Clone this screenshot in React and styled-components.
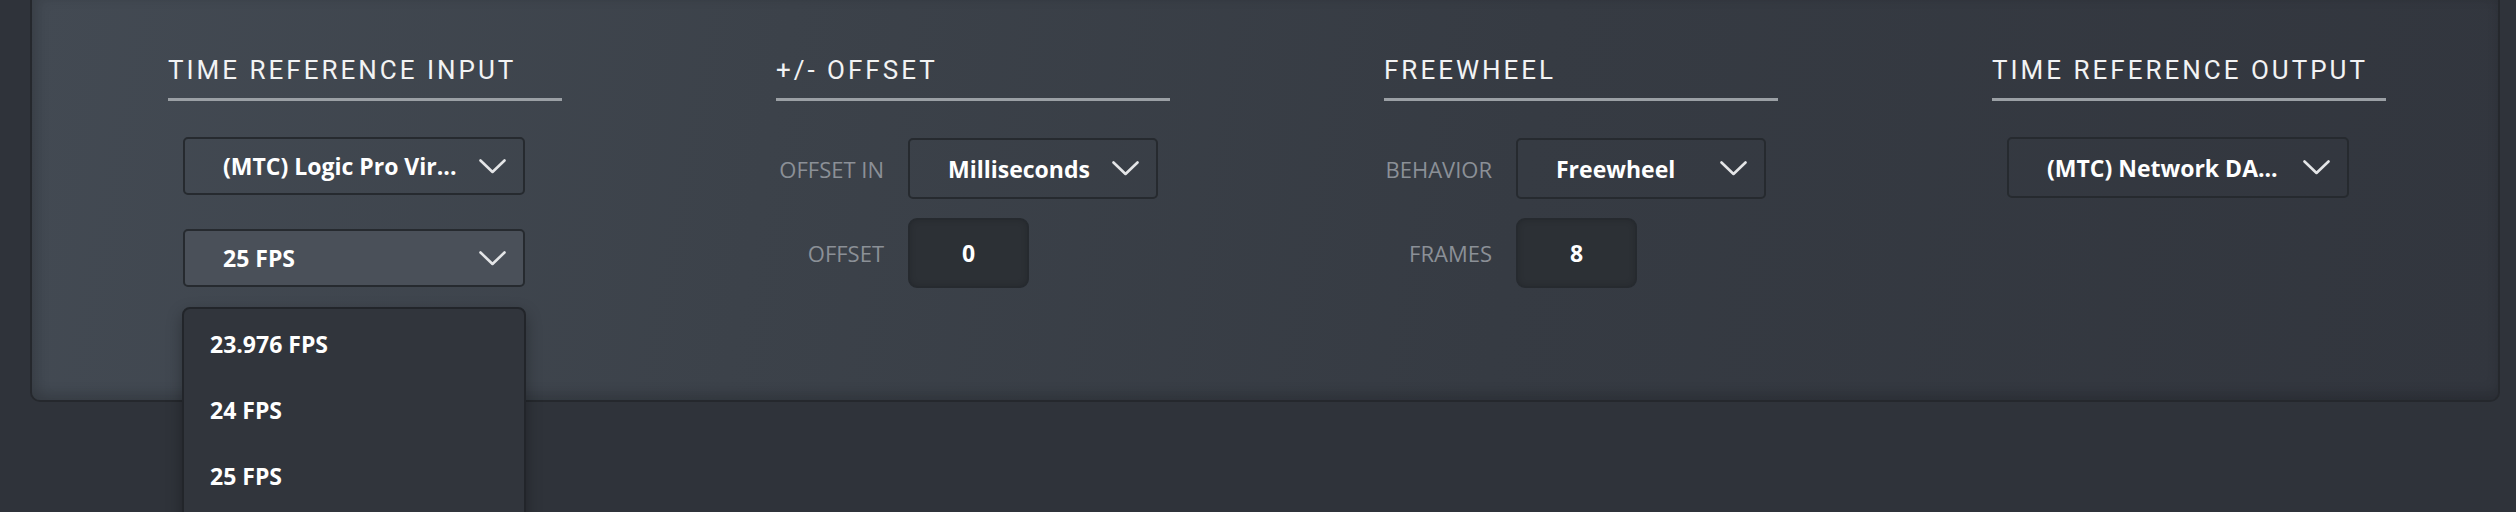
import React, { useState } from 'react'
import styled, { createGlobalStyle } from 'styled-components'

const GlobalStyle = createGlobalStyle`
  html, body {
    margin: 0;
    padding: 0;
    background: #2f333a;
    overflow: hidden;
  }
`

const FPS_OPTIONS = ['23.976 FPS', '24 FPS', '25 FPS']

const Chevron = () => (
  <svg width="27" height="15" viewBox="0 0 27 15" fill="none">
    <polyline points="1.5,1.5 13.5,13 25.5,1.5" stroke="#e4e5e7" strokeWidth="2.6" strokeLinecap="round" strokeLinejoin="round" />
  </svg>
)

const Dropdown = ({ value, width, height, active }) => (
  <SelectBox $width={width} $height={height} $active={active}>
    <SelectValue>{value}</SelectValue>
    <Chevron />
  </SelectBox>
)

const App = () => {
  const [fps, setFps] = useState('25 FPS')
  const [open] = useState(true)

  return (
    <>
      <GlobalStyle />
      <Page>
        <Panel>
          <Column>
            <Heading>Time Reference Input</Heading>
            <Stack>
              <Dropdown value="(MTC) Logic Pro Vir..." width={342} height={58} />
              <MenuAnchor>
                <Dropdown value={fps} width={342} height={58} active />
                {open && (
                  <Menu>
                    {FPS_OPTIONS.map((item) => (
                      <MenuItem key={item} onClick={() => setFps(item)}>{item}</MenuItem>
                    ))}
                  </Menu>
                )}
              </MenuAnchor>
            </Stack>
          </Column>

          <Column>
            <Heading>+/- Offset</Heading>
            <FieldGrid>
              <FieldLabel>Offset In</FieldLabel>
              <Dropdown value="Milliseconds" width={250} height={61} />
              <FieldLabel>Offset</FieldLabel>
              <NumberBox>0</NumberBox>
            </FieldGrid>
          </Column>

          <Column>
            <Heading>Freewheel</Heading>
            <FieldGrid>
              <FieldLabel>Behavior</FieldLabel>
              <Dropdown value="Freewheel" width={250} height={61} />
              <FieldLabel>Frames</FieldLabel>
              <NumberBox>8</NumberBox>
            </FieldGrid>
          </Column>

          <Column>
            <Heading>Time Reference Output</Heading>
            <Stack>
              <Dropdown value="(MTC) Network DA..." width={342} height={61} />
            </Stack>
          </Column>
        </Panel>
      </Page>
    </>
  )
}

export default App

const Page = styled.div`
  width: 2516px;
  height: 512px;
  background: #2f333a;
`

const Panel = styled.section`
  box-sizing: border-box;
  margin-left: 30px;
  width: 2470px;
  height: 402px;
  padding: 57px 0 0 136px;
  display: grid;
  grid-template-columns: repeat(4, 394px);
  column-gap: 214px;
  align-items: start;
  background: linear-gradient(100deg, #434a53 0%, #3c424a 30%, #363b43 60%, #32363e 100%);
  border: 2px solid #25282d;
  border-top: none;
  border-radius: 0 0 10px 10px;
  box-shadow: inset 0 -8px 12px rgba(0, 0, 0, 0.12), inset 8px 0 12px rgba(0, 0, 0, 0.08);
`

const Column = styled.div`
  display: flex;
  flex-direction: column;
`

const Heading = styled.h2`
  margin: 0;
  padding-bottom: 15px;
  border-bottom: 3px solid #9ba0a5;
  font-family: Roboto, "Liberation Sans", sans-serif;
  font-weight: 400;
  font-size: 26px;
  line-height: 26px;
  letter-spacing: 3px;
  text-transform: uppercase;
  color: #f2f3f4;
  white-space: nowrap;
`

const Stack = styled.div`
  display: flex;
  flex-direction: column;
  gap: 34px;
  margin: 36px 0 0 15px;
`

const MenuAnchor = styled.div`
  position: relative;
`

const SelectBox = styled.div`
  box-sizing: border-box;
  width: ${(p) => p.$width}px;
  height: ${(p) => p.$height}px;
  display: flex;
  align-items: center;
  gap: 18px;
  padding: 0 17px 0 38px;
  border: 2px solid #262a2f;
  border-radius: 5px;
  background: ${(p) => (p.$active ? '#4a5059' : 'transparent')};
  cursor: pointer;
`

const SelectValue = styled.span`
  flex: 1;
  min-width: 0;
  overflow: hidden;
  white-space: nowrap;
  font-family: "Open Sans", "Liberation Sans", sans-serif;
  font-weight: 700;
  font-size: 23px;
  color: #ffffff;
`

const Menu = styled.ul`
  position: absolute;
  top: calc(100% + 20px);
  left: -1px;
  box-sizing: border-box;
  width: 344px;
  height: 240px;
  margin: 0;
  padding: 2px 0 0;
  list-style: none;
  background: #31353c;
  border: 2px solid #22252a;
  border-radius: 8px;
  box-shadow: 0 6px 16px rgba(0, 0, 0, 0.3);
  z-index: 5;
`

const MenuItem = styled.li`
  height: 66px;
  display: flex;
  align-items: center;
  padding-left: 26px;
  font-family: "Open Sans", "Liberation Sans", sans-serif;
  font-weight: 700;
  font-size: 23px;
  color: #ffffff;
  cursor: pointer;
`

const FieldGrid = styled.div`
  display: grid;
  grid-template-columns: 108px auto;
  justify-content: start;
  align-items: center;
  column-gap: 24px;
  row-gap: 19px;
  margin-top: 37px;
`

const FieldLabel = styled.span`
  justify-self: end;
  font-family: "Open Sans", "Liberation Sans", sans-serif;
  font-weight: 400;
  font-size: 22px;
  text-transform: uppercase;
  white-space: nowrap;
  color: #8b9097;
`

const NumberBox = styled.div`
  box-sizing: border-box;
  width: 121px;
  height: 70px;
  display: flex;
  align-items: center;
  justify-content: center;
  border: 2px solid #262a2f;
  border-radius: 9px;
  background: #2c3035;
  box-shadow: inset 0 0 6px rgba(0, 0, 0, 0.15);
  font-family: "Open Sans", "Liberation Sans", sans-serif;
  font-weight: 700;
  font-size: 23px;
  color: #ffffff;
`
